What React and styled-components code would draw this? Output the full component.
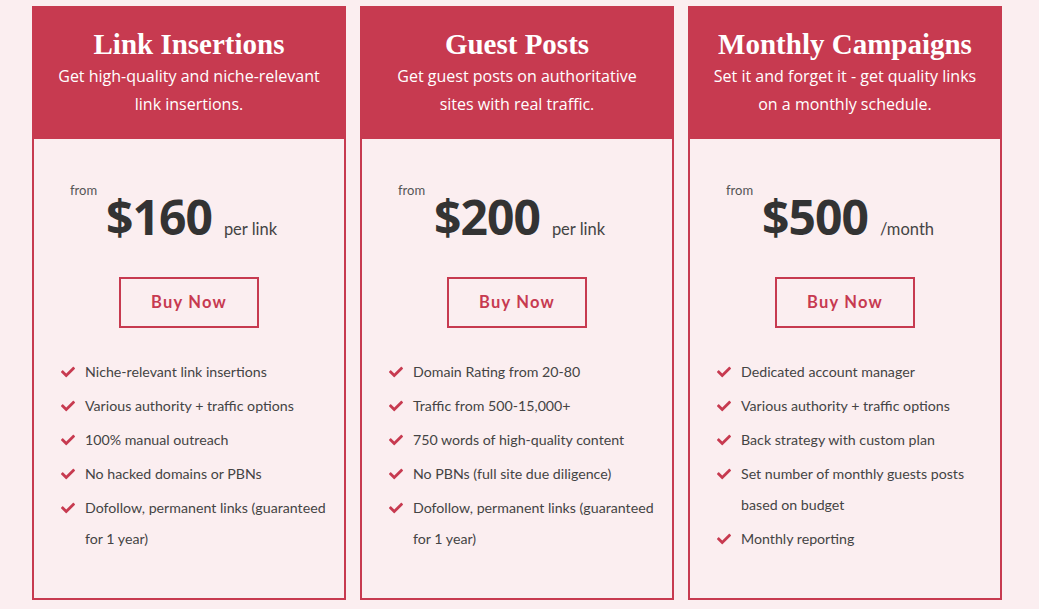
import React from "react";
import styled, { createGlobalStyle } from "styled-components";
import { FaCheck } from "react-icons/fa";

const Red = "#c73a50";
const Pink = "#fbeef0";

const GlobalStyle = createGlobalStyle`
  body {
    margin: 0;
    background: ${Pink};
    font-family: Lato, "Open Sans", sans-serif;
  }
`;

const Page = styled.div`
  display: flex;
  gap: 14px;
  padding: 6px 0 0 32px;
`;

const Card = styled.div`
  width: 314px;
  height: 594px;
  display: flex;
  flex-direction: column;
`;

const Header = styled.div`
  background: ${Red};
  color: #fff;
  text-align: center;
  padding: 23px 8px 21px;
`;

const Title = styled.h2`
  margin: 0;
  font-family: "Liberation Serif", serif;
  font-weight: 700;
  font-size: 29px;
  line-height: 30px;
`;

const Subtitle = styled.p`
  margin: 3px 0 0;
  font-family: "Open Sans", sans-serif;
  font-size: 16px;
  line-height: 28px;
`;

const Body = styled.div`
  flex: 1;
  border: 2px solid ${Red};
  border-top: none;
  padding: 43px 0 0;
`;

const PriceRow = styled.div`
  display: flex;
  align-items: baseline;
  padding-left: 36px;
  color: #333;
`;

const From = styled.span`
  align-self: flex-start;
  font-size: 13px;
  line-height: 16px;
  color: #555;
`;

const Amount = styled.span`
  margin-left: 9px;
  font-family: "Open Sans", sans-serif;
  font-weight: 700;
  font-size: 48px;
  line-height: 70px;
  letter-spacing: -1px;
`;

const Unit = styled.span`
  margin-left: 12px;
  font-size: 16.5px;
  color: #444;
`;

const Button = styled.a`
  display: flex;
  align-items: center;
  justify-content: center;
  box-sizing: border-box;
  width: 140px;
  height: 51px;
  margin: 25px auto 0;
  padding-bottom: 1px;
  border: 2px solid ${Red};
  color: ${Red};
  font-weight: 700;
  font-size: 16.5px;
  letter-spacing: 1.2px;
  cursor: pointer;
`;

const List = styled.ul`
  list-style: none;
  margin: 28px 0 0;
  padding: 0 18px 0 27px;
`;

const Item = styled.li`
  display: flex;
  font-size: 14.2px;
  line-height: 31px;
  color: #444;
  margin-bottom: 3px;

  svg {
    flex: none;
    color: ${Red};
    width: 14px;
    height: 14px;
    margin: 9px 10px 0 0;
  }
`;

const plans = [
  {
    title: "Link Insertions",
    text: ["Get high-quality and niche-relevant", "link insertions."],
    price: "$160",
    unit: "per link",
    items: [
      "Niche-relevant link insertions",
      "Various authority + traffic options",
      "100% manual outreach",
      "No hacked domains or PBNs",
      "Dofollow, permanent links (guaranteed for 1 year)",
    ],
  },
  {
    title: "Guest Posts",
    text: ["Get guest posts on authoritative", "sites with real traffic."],
    price: "$200",
    unit: "per link",
    items: [
      "Domain Rating from 20-80",
      "Traffic from 500-15,000+",
      "750 words of high-quality content",
      "No PBNs (full site due diligence)",
      "Dofollow, permanent links (guaranteed for 1 year)",
    ],
  },
  {
    title: "Monthly Campaigns",
    text: ["Set it and forget it - get quality links", "on a monthly schedule."],
    price: "$500",
    unit: "/month",
    items: [
      "Dedicated account manager",
      "Various authority + traffic options",
      "Back strategy with custom plan",
      "Set number of monthly guests posts based on budget",
      "Monthly reporting",
    ],
  },
];

const App = () => {
  return (
    <>
      <GlobalStyle />
      <Page>
        {plans.map(plan => (
          <Card key={plan.title}>
            <Header>
              <Title>{plan.title}</Title>
              <Subtitle>
                {plan.text[0]}
                <br />
                {plan.text[1]}
              </Subtitle>
            </Header>
            <Body>
              <PriceRow>
                <From>from</From>
                <Amount>{plan.price}</Amount>
                <Unit>{plan.unit}</Unit>
              </PriceRow>
              <Button>Buy Now</Button>
              <List>
                {plan.items.map(item => (
                  <Item key={item}>
                    <FaCheck />
                    <span>{item}</span>
                  </Item>
                ))}
              </List>
            </Body>
          </Card>
        ))}
      </Page>
    </>
  );
};

export default App;
